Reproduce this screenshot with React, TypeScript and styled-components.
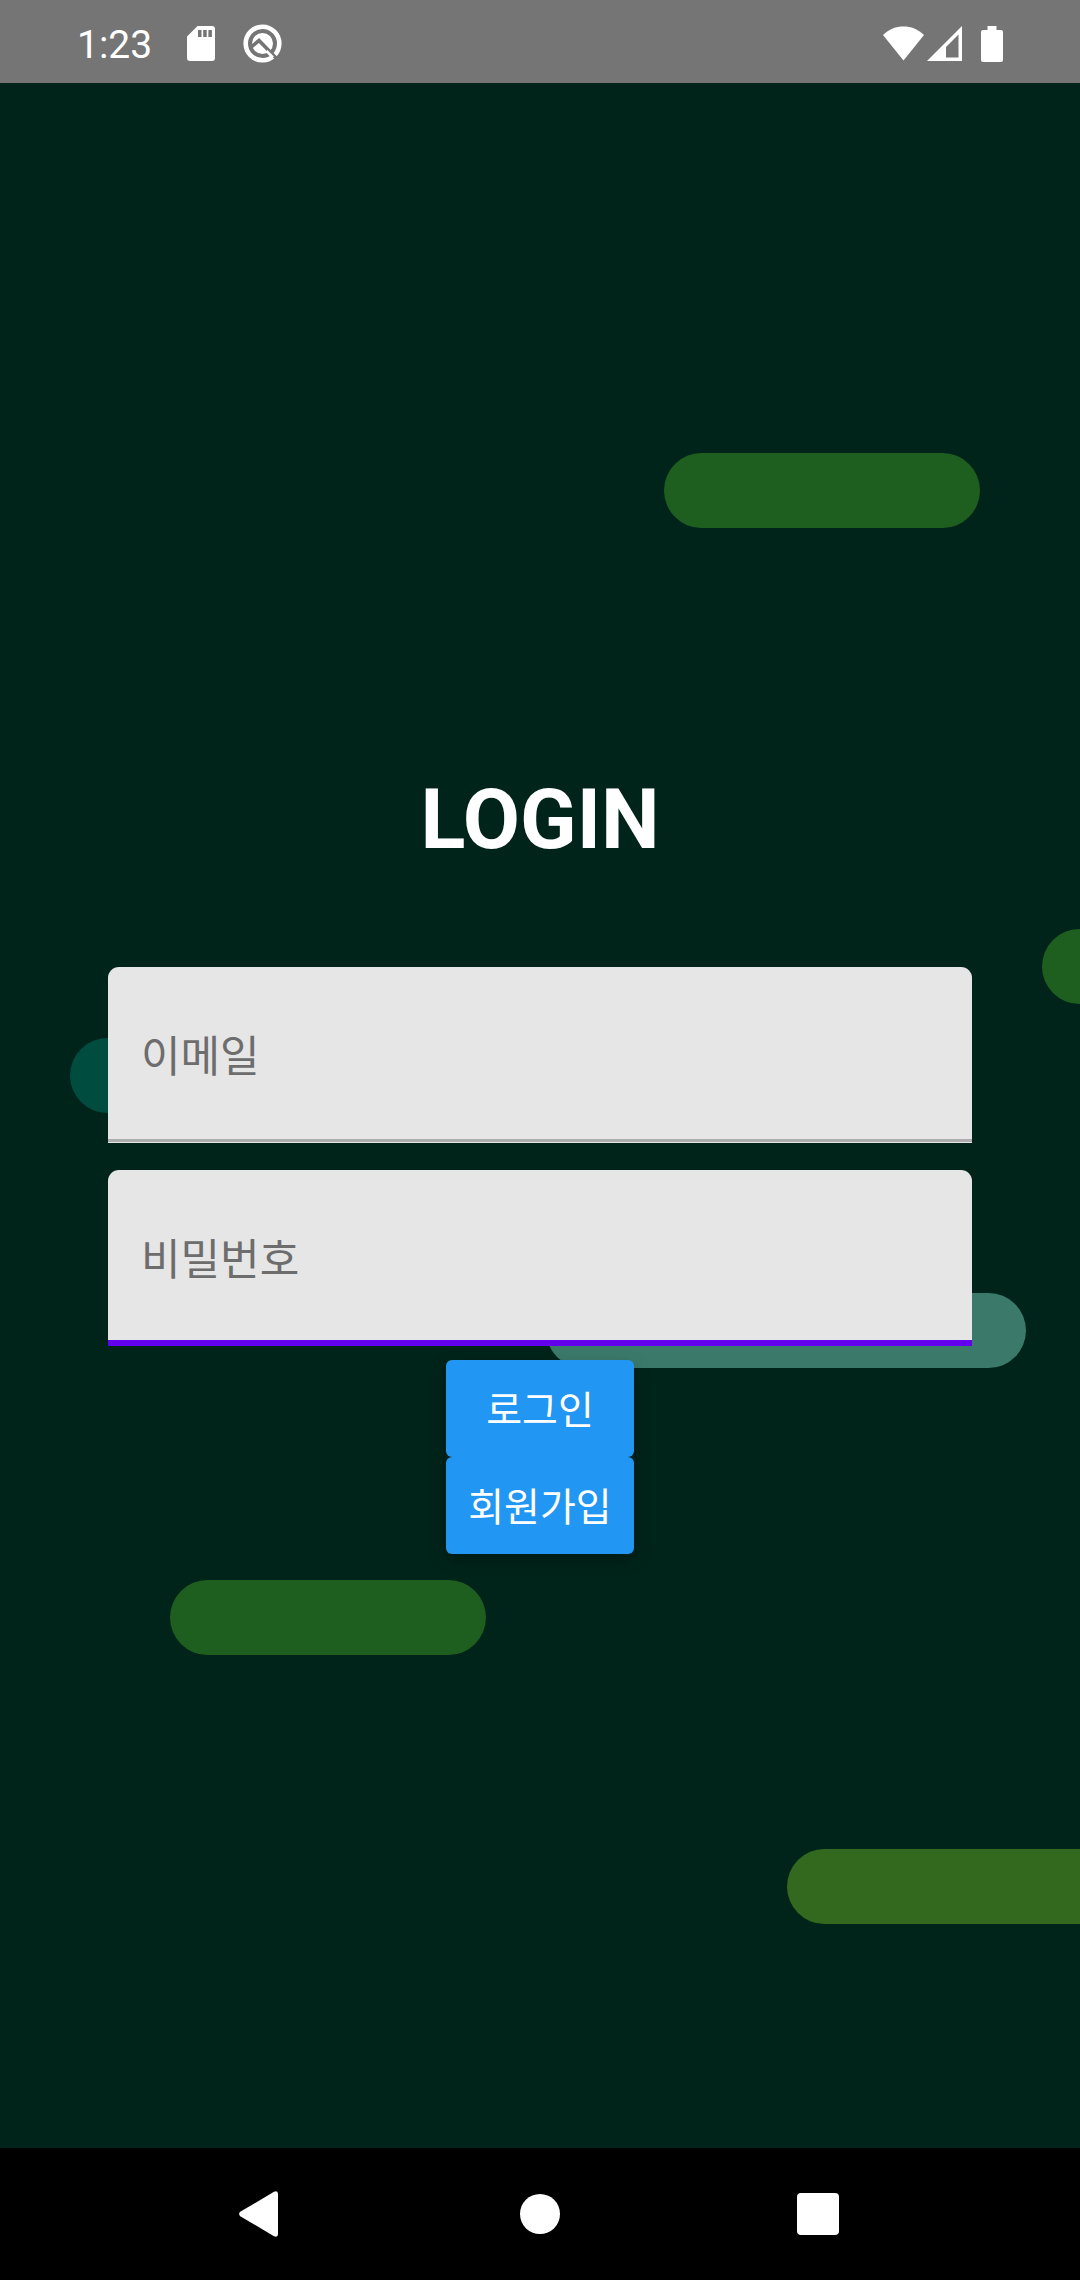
import React from "react";
import styled, { createGlobalStyle } from "styled-components";

const GlobalStyle = createGlobalStyle`
  *, *::before, *::after { box-sizing: border-box; }
  body {
    margin: 0;
    background: #00241a;
    font-family: Roboto, "Noto Sans CJK KR", sans-serif;
  }
`;

const Screen = styled.div`
  display: flex;
  flex-direction: column;
  min-height: 100vh;
`;

const StatusBar = styled.header`
  display: flex;
  align-items: center;
  justify-content: space-between;
  height: 83px;
  padding: 4px 77px 0 77px;
  background: #757575;
  color: #fff;
`;

const StatusGroup = styled.div<{ $gap: number }>`
  display: flex;
  align-items: center;
  gap: ${({ $gap }) => $gap}px;
`;

const Clock = styled.time`
  margin-right: 7px;
  padding-top: 2px;
  font-size: 39px;
  line-height: 46px;
`;

const Main = styled.main`
  position: relative;
  flex: 1;
  display: flex;
  flex-direction: column;
  justify-content: center;
  overflow: hidden;
  padding: 0 10%;
`;

const Pill = styled.span<{ $x: number; $y: number; $w: number; $color: string }>`
  position: absolute;
  left: ${({ $x }) => $x}px;
  top: ${({ $y }) => $y}px;
  width: ${({ $w }) => $w}px;
  height: 75px;
  border-radius: 38px;
  background: ${({ $color }) => $color};
`;

const Form = styled.form`
  position: relative;
  display: flex;
  flex-direction: column;
`;

const Title = styled.h1`
  margin: 94px 0 98px;
  color: #fff;
  font-size: 83px;
  font-weight: 700;
  line-height: 98px;
  text-align: center;
`;

const Fields = styled.div`
  display: flex;
  flex-direction: column;
  gap: 27px;
`;

const Field = styled.input<{ $active?: boolean }>`
  width: 100%;
  height: 176px;
  padding: 4px 33px 0;
  border: 0;
  border-radius: 11px 11px 0 0;
  outline: 0;
  background: #e6e6e6;
  box-shadow: ${({ $active }) =>
    $active ? "inset 0 -6px #6200ee" : "inset 0 -1px #e6e6e6, inset 0 -4px #adadad"};
  color: #212121;
  font-family: inherit;
  font-size: 43px;

  &::placeholder {
    color: #6d6d6d;
    opacity: 1;
  }
`;

const Actions = styled.div`
  display: flex;
  flex-direction: column;
  align-self: center;
  margin-top: 14px;
  border-radius: 6px;
  box-shadow: 0 6px 16px rgba(0, 0, 0, 0.25);
`;

const ActionButton = styled.button`
  height: 97px;
  padding: 0 22px 3px;
  border: 0;
  border-radius: 6px;
  background: #2196f3;
  color: #fff;
  font-family: inherit;
  font-size: 39px;
  cursor: pointer;
`;

const NavBar = styled.nav`
  display: flex;
  align-items: center;
  justify-content: center;
  gap: 158px;
  height: 132px;
  background: #000;
`;

const NavButton = styled.button`
  display: flex;
  align-items: center;
  justify-content: center;
  width: 120px;
  height: 120px;
  padding: 0;
  border: 0;
  background: transparent;
  color: #fff;
  cursor: pointer;
`;

const pills = [
  { x: 664, y: 370, w: 316, color: "#1e5f20" },
  { x: 1042, y: 846, w: 316, color: "#1e5f20" },
  { x: 70, y: 955, w: 316, color: "#004d40" },
  { x: 546, y: 1210, w: 480, color: "#3b7a6b" },
  { x: 170, y: 1497, w: 316, color: "#1e5f20" },
  { x: 787, y: 1766, w: 480, color: "#33691e" },
];

const SdCardIcon = () => (
  <svg width="28" height="35" viewBox="0 0 28 35" fill="#fff" aria-hidden="true">
    <path
      fillRule="evenodd"
      d="M10.500 0H25a3 3 0 0 1 3 3v29a3 3 0 0 1-3 3H3a3 3 0 0 1-3-3V10.500ZM11 4v7h3.500V4Zm5.200 0v7h3.500V4Zm5.200 0v7h3.500V4Z"
    />
  </svg>
);

const DebugIcon = () => (
  <svg width="39" height="39" viewBox="0 0 39 39" aria-hidden="true">
    <circle cx="19.500" cy="19.500" r="16.800" fill="none" stroke="#fff" strokeWidth="4.600" />
    <circle cx="19.500" cy="19.500" r="10.500" fill="#fff" />
    <path d="M7 24L16 16.500L34 35" fill="none" stroke="#757575" strokeWidth="3.600" />
    <path d="M23.500 27L30 33.500" stroke="#fff" strokeWidth="2.500" />
  </svg>
);

const WifiIcon = () => (
  <svg width="41" height="35" viewBox="0 0 41 35" fill="#fff" aria-hidden="true">
    <path d="M0 9C6 3 13 .5 20.500 .5S35 3 41 9L20.500 34.500Z" />
  </svg>
);

const SignalIcon = () => (
  <svg width="35" height="35" viewBox="0 0 35 35" fill="#fff" aria-hidden="true">
    <path fillRule="evenodd" d="M35 0V35H0ZM31.500 8.500L19 21V31.500H31.500Z" />
  </svg>
);

const BatteryIcon = () => (
  <svg width="22" height="36" viewBox="0 0 22 36" fill="#fff" aria-hidden="true">
    <path d="M6.500 0h9v4H20a2 2 0 0 1 2 2v28a2 2 0 0 1-2 2H2a2 2 0 0 1-2-2V6a2 2 0 0 1 2-2h4.500Z" />
  </svg>
);

export default function App() {
  return (
    <Screen>
      <GlobalStyle />
      <StatusBar>
        <StatusGroup $gap={28}>
          <Clock>1:23</Clock>
          <SdCardIcon />
          <DebugIcon />
        </StatusGroup>
        <StatusGroup $gap={19}>
          <StatusGroup $gap={3}>
            <WifiIcon />
            <SignalIcon />
          </StatusGroup>
          <BatteryIcon />
        </StatusGroup>
      </StatusBar>

      <Main>
        {pills.map((p) => (
          <Pill key={`${p.x}-${p.y}`} $x={p.x} $y={p.y} $w={p.w} $color={p.color} aria-hidden="true" />
        ))}
        <Form onSubmit={(e) => e.preventDefault()}>
          <Title>LOGIN</Title>
          <Fields>
            <Field type="email" name="email" placeholder="이메일" aria-label="이메일" />
            <Field $active type="password" name="password" placeholder="비밀번호" aria-label="비밀번호" />
          </Fields>
          <Actions>
            <ActionButton type="submit">로그인</ActionButton>
            <ActionButton type="button">회원가입</ActionButton>
          </Actions>
        </Form>
      </Main>

      <NavBar>
        <NavButton type="button" aria-label="Back">
          <svg width="46" height="46" viewBox="0 0 46 46" fill="currentColor" aria-hidden="true">
            <path d="M1.200 20.800L35 .8Q39 -.8 39 3V43Q39 46.800 35 45.200L1.200 25.200Q-1 23 1.200 20.800Z" />
          </svg>
        </NavButton>
        <NavButton type="button" aria-label="Home">
          <svg width="40" height="40" viewBox="0 0 40 40" fill="currentColor" aria-hidden="true">
            <circle cx="20" cy="20" r="20" />
          </svg>
        </NavButton>
        <NavButton type="button" aria-label="Recent apps">
          <svg width="42" height="42" viewBox="0 0 42 42" fill="currentColor" aria-hidden="true">
            <rect width="42" height="42" rx="4" />
          </svg>
        </NavButton>
      </NavBar>
    </Screen>
  );
}
